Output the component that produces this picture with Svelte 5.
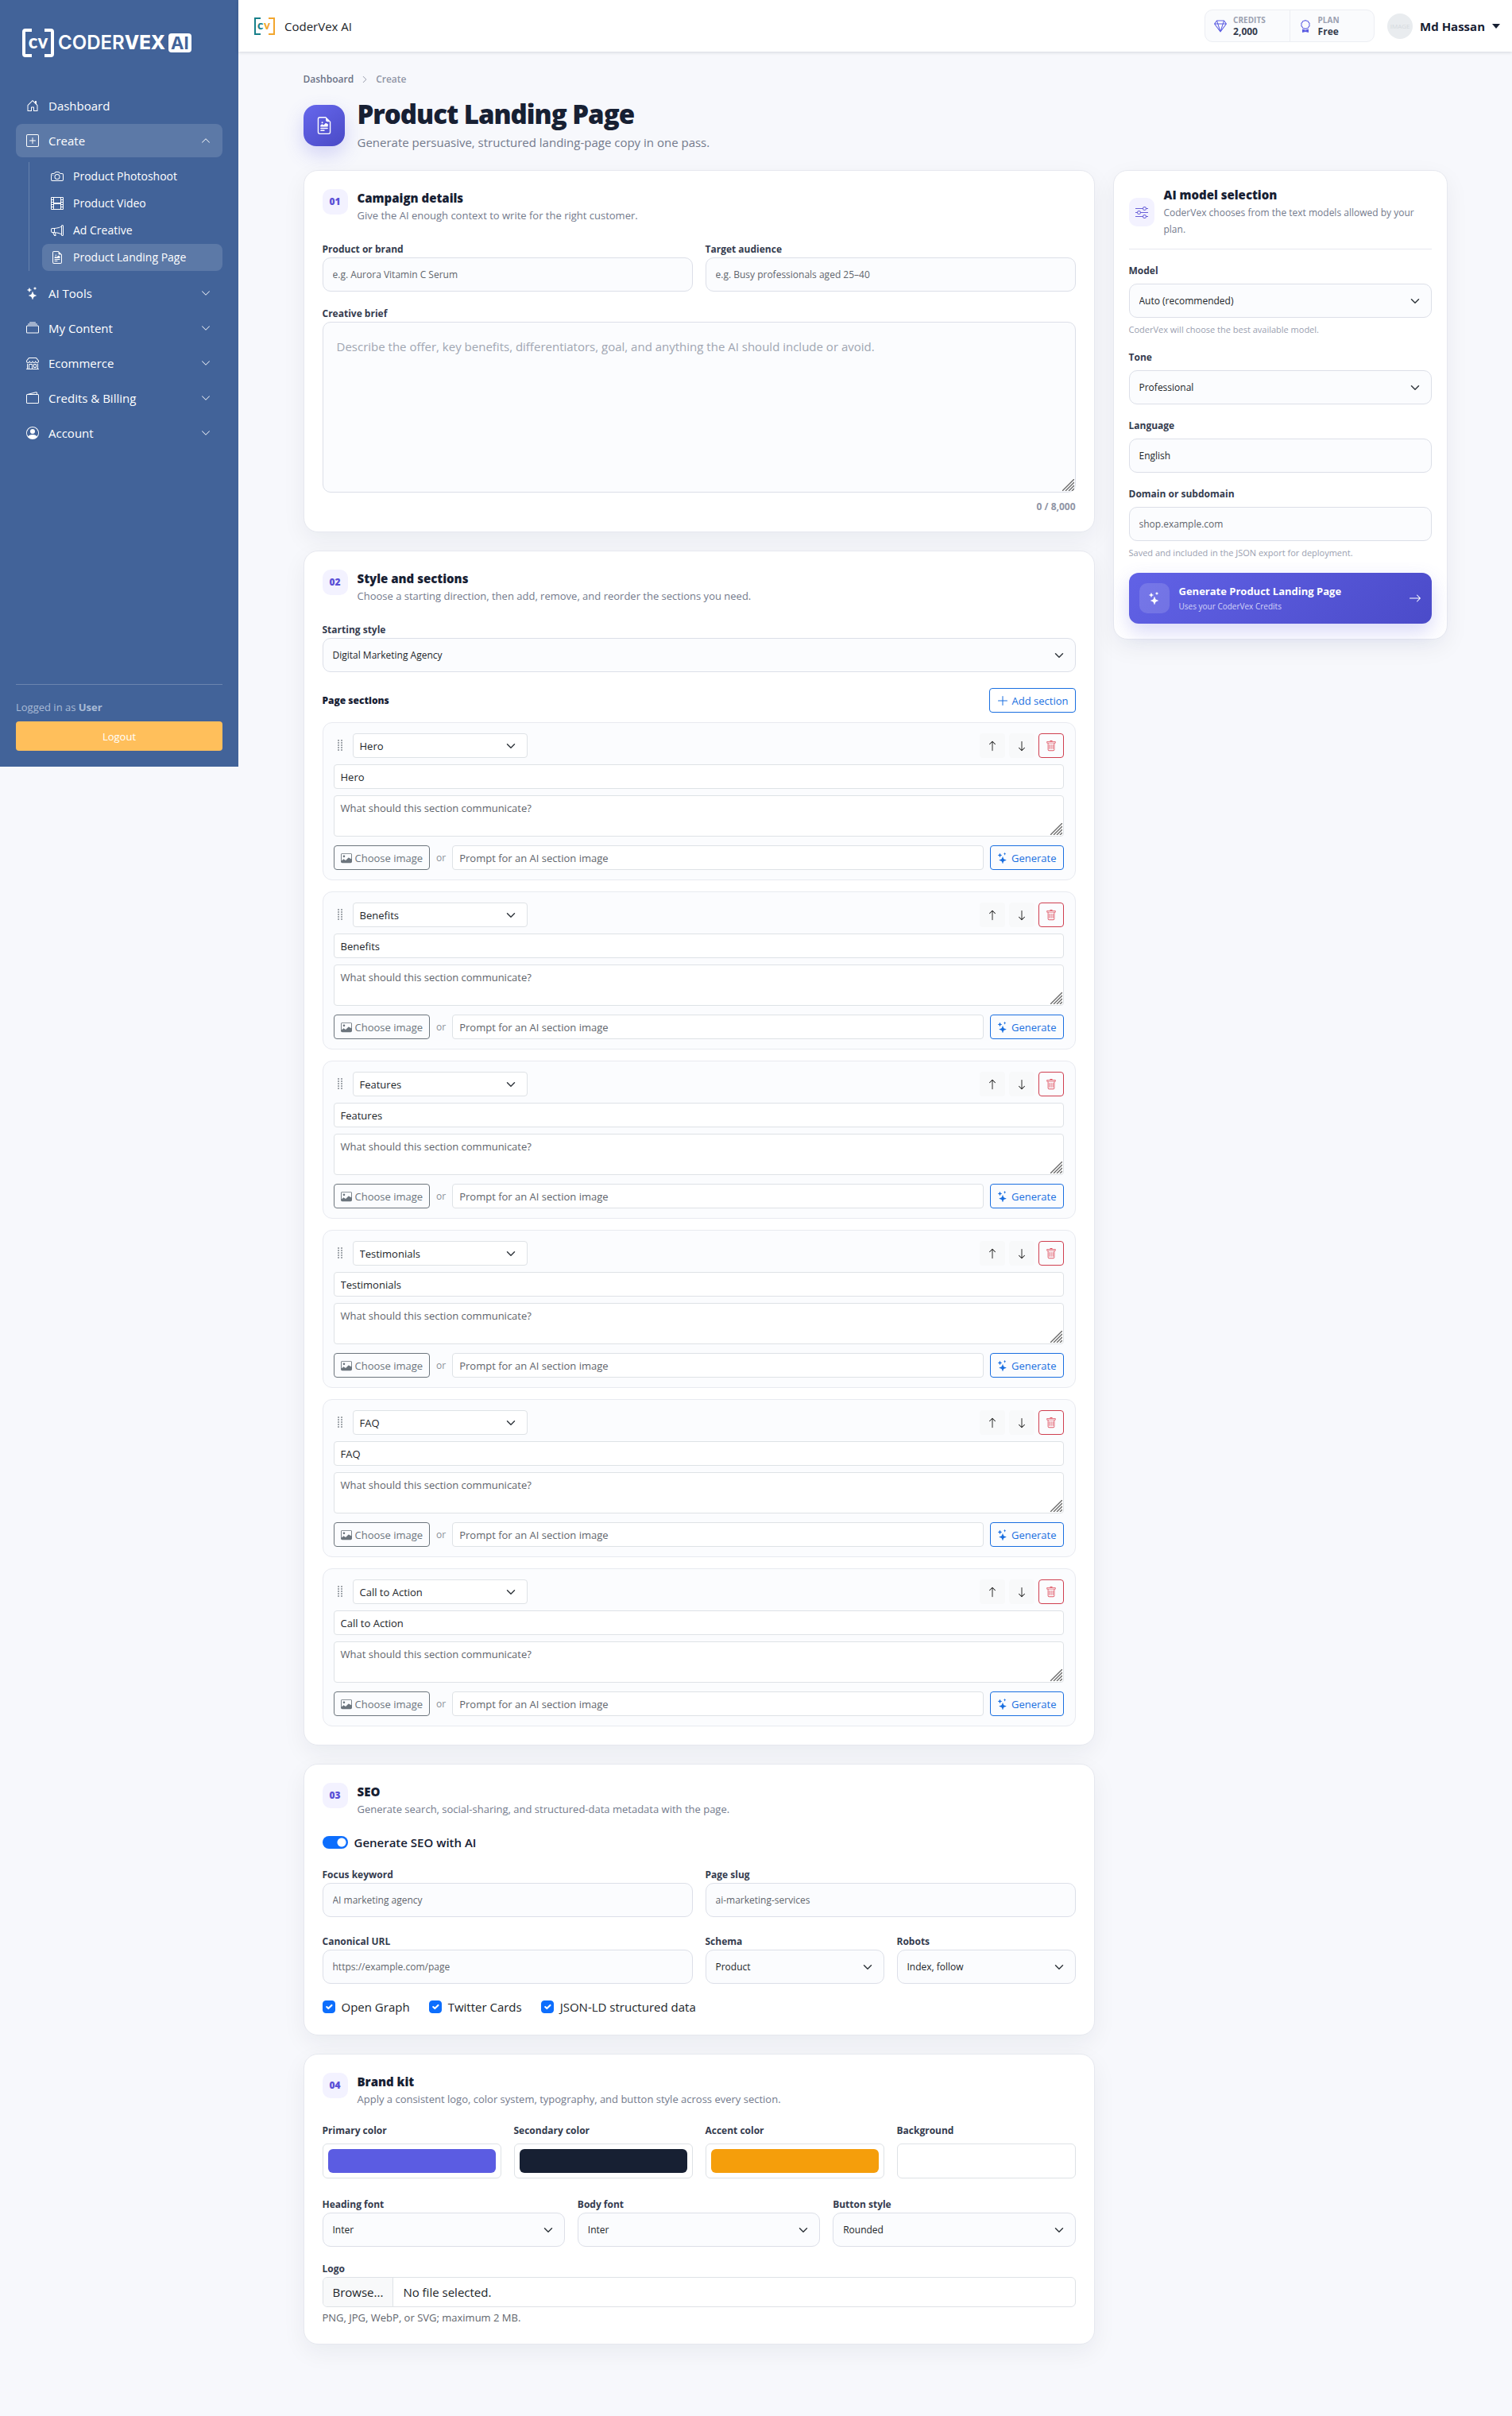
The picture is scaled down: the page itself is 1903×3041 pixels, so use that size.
<script lang="ts">
  type NavItem = { label: string; icon: string; children?: { label: string; icon: string; active?: boolean }[] };

  const nav: NavItem[] = [
    { label: "Dashboard", icon: "house" },
    {
      label: "Create",
      icon: "plusSquare",
      children: [
        { label: "Product Photoshoot", icon: "camera" },
        { label: "Product Video", icon: "film" },
        { label: "Ad Creative", icon: "megaphone" },
        { label: "Product Landing Page", icon: "richtext", active: true },
      ],
    },
    { label: "AI Tools", icon: "stars" },
    { label: "My Content", icon: "collection" },
    { label: "Ecommerce", icon: "shop" },
    { label: "Credits & Billing", icon: "wallet" },
    { label: "Account", icon: "person" },
  ];

  // 16x16 icon paths
  const icons: Record<string, string[]> = {
    house: ["M8.354 1.146a.5.5 0 0 0-.708 0l-6 6A.5.5 0 0 0 1.5 7.5v7a.5.5 0 0 0 .5.5h4.5a.5.5 0 0 0 .5-.5v-4h2v4a.5.5 0 0 0 .5.5H14a.5.5 0 0 0 .5-.5v-7a.5.5 0 0 0-.146-.354L13 5.793V2.5a.5.5 0 0 0-.5-.5h-1a.5.5 0 0 0-.5.5v1.293zM2.5 14V7.707l5.5-5.5 5.5 5.5V14H10v-4a.5.5 0 0 0-.5-.5h-3a.5.5 0 0 0-.5.5v4z"],
    plusSquare: [
      "M14 1a1 1 0 0 1 1 1v12a1 1 0 0 1-1 1H2a1 1 0 0 1-1-1V2a1 1 0 0 1 1-1zM2 0a2 2 0 0 0-2 2v12a2 2 0 0 0 2 2h12a2 2 0 0 0 2-2V2a2 2 0 0 0-2-2z",
      "M8 4a.5.5 0 0 1 .5.5v3h3a.5.5 0 0 1 0 1h-3v3a.5.5 0 0 1-1 0v-3h-3a.5.5 0 0 1 0-1h3v-3A.5.5 0 0 1 8 4",
    ],
    camera: [
      "M15 12a1 1 0 0 1-1 1H2a1 1 0 0 1-1-1V6a1 1 0 0 1 1-1h1.172a3 3 0 0 0 2.12-.879l.83-.828A1 1 0 0 1 6.827 3h2.344a1 1 0 0 1 .707.293l.828.828A3 3 0 0 0 12.828 5H14a1 1 0 0 1 1 1zM2 4a2 2 0 0 0-2 2v6a2 2 0 0 0 2 2h12a2 2 0 0 0 2-2V6a2 2 0 0 0-2-2h-1.172a2 2 0 0 1-1.414-.586l-.828-.828A2 2 0 0 0 9.172 2H6.828a2 2 0 0 0-1.414.586l-.828.828A2 2 0 0 1 3.172 4z",
      "M8 11a2.5 2.5 0 1 1 0-5 2.5 2.5 0 0 1 0 5m0 1a3.5 3.5 0 1 0 0-7 3.5 3.5 0 0 0 0 7M3 6.5a.5.5 0 1 1-1 0 .5.5 0 0 1 1 0",
    ],
    film: ["M0 1a1 1 0 0 1 1-1h14a1 1 0 0 1 1 1v14a1 1 0 0 1-1 1H1a1 1 0 0 1-1-1zm4 0v6h8V1zm8 8H4v6h8zM1 1v2h2V1zm2 3H1v2h2zM1 7v2h2V7zm2 3H1v2h2zm-2 3v2h2v-2zM15 1h-2v2h2zm-2 3v2h2V4zm2 3h-2v2h2zm-2 3v2h2v-2zm2 3h-2v2h2z"],
    megaphone: ["M13 2.5a1.5 1.5 0 0 1 3 0v11a1.5 1.5 0 0 1-3 0v-.214c-2.162-1.241-4.49-1.843-6.912-2.083l.405 2.712A1 1 0 0 1 5.51 15.1h-.548a1 1 0 0 1-.916-.599l-1.85-3.49-.202-.003A2.014 2.014 0 0 1 0 9V7a2.02 2.02 0 0 1 1.992-2.013 75 75 0 0 0 2.483-.075c3.043-.154 6.148-.849 8.525-2.199zm1 0v11a.5.5 0 0 0 1 0v-11a.5.5 0 0 0-1 0m-1 1.35c-2.344 1.205-5.209 1.842-8 2.033v4.233q.27.015.537.036c2.568.189 5.093.744 7.463 1.993zm-9 6.215v-4.13a95 95 0 0 1-1.992.052A1.02 1.02 0 0 0 1 7v2c0 .55.448 1.002 1.006 1.009A61 61 0 0 1 4 10.065m-.657.975 1.609 3.037.01.024h.548l-.002-.014-.443-2.966a68 68 0 0 0-1.722-.082z"],
    richtext: [
      "M14 4.5V14a2 2 0 0 1-2 2H4a2 2 0 0 1-2-2V2a2 2 0 0 1 2-2h5.5zm-3 0A1.5 1.5 0 0 1 9.5 3V1H4a1 1 0 0 0-1 1v12a1 1 0 0 0 1 1h8a1 1 0 0 0 1-1V4.5z",
      "M4.5 12.5A.5.5 0 0 1 5 12h3a.5.5 0 0 1 0 1H5a.5.5 0 0 1-.5-.5m0-2A.5.5 0 0 1 5 10h6a.5.5 0 0 1 0 1H5a.5.5 0 0 1-.5-.5m1.639-3.708 1.33.886 1.854-1.855a.25.25 0 0 1 .289-.047l1.888.974V8.5a.5.5 0 0 1-.5.5H5a.5.5 0 0 1-.5-.5V8s1.54-1.274 1.639-1.208M6.25 6a.75.75 0 1 0 0-1.5.75.75 0 0 0 0 1.5",
    ],
    stars: ["M7.657 6.247c.11-.33.576-.33.686 0l.645 1.937a2.89 2.89 0 0 0 1.829 1.828l1.936.645c.33.11.33.576 0 .686l-1.937.645a2.89 2.89 0 0 0-1.828 1.829l-.645 1.936a.361.361 0 0 1-.686 0l-.645-1.937a2.89 2.89 0 0 0-1.828-1.828l-1.937-.645a.361.361 0 0 1 0-.686l1.937-.645a2.89 2.89 0 0 0 1.828-1.828zM3.794 1.148a.217.217 0 0 1 .412 0l.387 1.162c.173.518.579.924 1.097 1.097l1.162.387a.217.217 0 0 1 0 .412l-1.162.387A1.73 1.73 0 0 0 4.593 5.69l-.387 1.162a.217.217 0 0 1-.412 0L3.407 5.69A1.73 1.73 0 0 0 2.31 4.593l-1.162-.387a.217.217 0 0 1 0-.412l1.162-.387A1.73 1.73 0 0 0 3.407 2.31zM10.863.099a.145.145 0 0 1 .274 0l.258.774c.115.346.386.617.732.732l.774.258a.145.145 0 0 1 0 .274l-.774.258a1.16 1.16 0 0 0-.732.732l-.258.774a.145.145 0 0 1-.274 0l-.258-.774a1.16 1.16 0 0 0-.732-.732L9.1 2.137a.145.145 0 0 1 0-.274l.774-.258c.346-.115.617-.386.732-.732z"],
    collection: ["M2.5 3.5a.5.5 0 0 1 0-1h11a.5.5 0 0 1 0 1zm2-2a.5.5 0 0 1 0-1h7a.5.5 0 0 1 0 1zM0 13a1.5 1.5 0 0 0 1.5 1.5h13A1.5 1.5 0 0 0 16 13V6a1.5 1.5 0 0 0-1.5-1.5h-13A1.5 1.5 0 0 0 0 6zm1.5.5A.5.5 0 0 1 1 13V6a.5.5 0 0 1 .5-.5h13a.5.5 0 0 1 .5.5v7a.5.5 0 0 1-.5.5z"],
    shop: ["M2.97 1.35A1 1 0 0 1 3.73 1h8.54a1 1 0 0 1 .76.35l2.609 3.044A1.5 1.5 0 0 1 16 5.37v.255a2.375 2.375 0 0 1-4.25 1.458A2.37 2.37 0 0 1 9.875 8 2.37 2.37 0 0 1 8 7.083 2.37 2.37 0 0 1 6.125 8a2.37 2.37 0 0 1-1.875-.917A2.375 2.375 0 0 1 0 5.625V5.37a1.5 1.5 0 0 1 .361-.976zm1.78 4.275a1.375 1.375 0 0 0 2.75 0 .5.5 0 0 1 1 0 1.375 1.375 0 0 0 2.75 0 .5.5 0 0 1 1 0 1.375 1.375 0 1 0 2.75 0V5.37a.5.5 0 0 0-.12-.325L12.27 2H3.73L1.12 5.045A.5.5 0 0 0 1 5.37v.255a1.375 1.375 0 0 0 2.75 0 .5.5 0 0 1 1 0M1.5 8.5A.5.5 0 0 1 2 9v6h1v-5a1 1 0 0 1 1-1h3a1 1 0 0 1 1 1v5h6V9a.5.5 0 0 1 1 0v6h.5a.5.5 0 0 1 0 1H.5a.5.5 0 0 1 0-1H1V9a.5.5 0 0 1 .5-.5M4 15h3v-5H4zm5-5a1 1 0 0 1 1-1h2a1 1 0 0 1 1 1v3a1 1 0 0 1-1 1h-2a1 1 0 0 1-1-1zm3 0h-2v3h2z"],
    wallet: ["M12.136.326A1.5 1.5 0 0 1 14 1.78V3h.5A1.5 1.5 0 0 1 16 4.5v9a1.5 1.5 0 0 1-1.5 1.5h-13A1.5 1.5 0 0 1 0 13.5v-9a1.5 1.5 0 0 1 1.432-1.499zM5.562 3H13V1.78a.5.5 0 0 0-.621-.484zM1.5 4a.5.5 0 0 0-.5.5v9a.5.5 0 0 0 .5.5h13a.5.5 0 0 0 .5-.5v-9a.5.5 0 0 0-.5-.5z"],
    person: [
      "M11 6a3 3 0 1 1-6 0 3 3 0 0 1 6 0",
      "M0 8a8 8 0 1 1 16 0A8 8 0 0 1 0 8m8-7a7 7 0 0 0-5.468 11.37C3.242 11.226 4.805 10 8 10s4.757 1.225 5.468 2.37A7 7 0 0 0 8 1",
    ],
    chevron: ["M1.646 4.646a.5.5 0 0 1 .708 0L8 10.293l5.646-5.647a.5.5 0 0 1 .708.708l-6 6a.5.5 0 0 1-.708 0l-6-6a.5.5 0 0 1 0-.708"],
    gem: ["M3.1.7a.5.5 0 0 1 .4-.2h9a.5.5 0 0 1 .4.2l2.976 3.974c.149.185.156.45.01.644L8.4 15.3a.5.5 0 0 1-.8 0L.1 5.3a.5.5 0 0 1 0-.6zm11.386 3.785-1.806-2.41-.776 2.413zm-3.633.004.961-2.989H4.186l.963 2.995zM5.47 5.495 8 13.366l2.532-7.876zm-1.371-.999-.78-2.422-1.818 2.425zM1.499 5.5l5.113 6.817-2.192-6.82zm7.889 6.817 5.123-6.83-2.928.002z"],
    award: [
      "M9.669.864 8 0 6.331.864l-1.858.282-.842 1.68-1.337 1.32L2.6 6l-.306 1.854 1.337 1.32.842 1.68 1.858.282L8 12l1.669-.864 1.858-.282.842-1.68 1.337-1.32L13.4 6l.306-1.854-1.337-1.32-.842-1.68zm1.196 1.193.684 1.365 1.086 1.072L12.387 6l.248 1.506-1.086 1.072-.684 1.365-1.51.229L8 10.874l-1.355-.702-1.51-.229-.684-1.365-1.086-1.072L3.614 6l-.25-1.506 1.087-1.072.684-1.365 1.51-.229L8 1.126l1.356.702z",
      "M4 11.794V16l4-1 4 1v-4.206l-2.018.306L8 13.126 6.018 12.1z",
    ],
    sliders: ["M11.5 2a1.5 1.5 0 1 0 0 3 1.5 1.5 0 0 0 0-3M9.05 3a2.5 2.5 0 0 1 4.9 0H16v1h-2.05a2.5 2.5 0 0 1-4.9 0H0V3zM4.5 7a1.5 1.5 0 1 0 0 3 1.5 1.5 0 0 0 0-3M2.05 8a2.5 2.5 0 0 1 4.9 0H16v1H6.95a2.5 2.5 0 0 1-4.9 0H0V8zm9.45 4a1.5 1.5 0 1 0 0 3 1.5 1.5 0 0 0 0-3m-2.45 1a2.5 2.5 0 0 1 4.9 0H16v1h-2.05a2.5 2.5 0 0 1-4.9 0H0v-1z"],
    arrow: ["M8 15a.5.5 0 0 0 .5-.5V2.707l3.146 3.147a.5.5 0 0 0 .708-.708l-4-4a.5.5 0 0 0-.708 0l-4 4a.5.5 0 1 0 .708.708L7.5 2.707V14.5a.5.5 0 0 0 .5.5"],
    plus: ["M8 2a.5.5 0 0 1 .5.5v5h5a.5.5 0 0 1 0 1h-5v5a.5.5 0 0 1-1 0v-5h-5a.5.5 0 0 1 0-1h5v-5A.5.5 0 0 1 8 2"],
    trash: [
      "M5.5 5.5A.5.5 0 0 1 6 6v6a.5.5 0 0 1-1 0V6a.5.5 0 0 1 .5-.5m2.5 0a.5.5 0 0 1 .5.5v6a.5.5 0 0 1-1 0V6a.5.5 0 0 1 .5-.5m3 .5a.5.5 0 0 0-1 0v6a.5.5 0 0 0 1 0z",
      "M14.5 3a1 1 0 0 1-1 1H13v9a2 2 0 0 1-2 2H5a2 2 0 0 1-2-2V4h-.5a1 1 0 0 1-1-1V2a1 1 0 0 1 1-1H6a1 1 0 0 1 1-1h2a1 1 0 0 1 1 1h3.5a1 1 0 0 1 1 1zM4.118 4 4 4.059V13a1 1 0 0 0 1 1h6a1 1 0 0 0 1-1V4.059L11.882 4zM2.5 3h11V2h-11z",
    ],
    image: [
      "M6.002 5.5a1.5 1.5 0 1 1-3 0 1.5 1.5 0 0 1 3 0",
      "M2.002 1a2 2 0 0 0-2 2v10a2 2 0 0 0 2 2h12a2 2 0 0 0 2-2V3a2 2 0 0 0-2-2zm12 1a1 1 0 0 1 1 1v6.5l-3.777-1.947a.5.5 0 0 0-.577.093l-3.71 3.71-2.66-1.772a.5.5 0 0 0-.63.062L1.002 12V3a1 1 0 0 1 1-1z",
    ],
  };

  const sectionTypes = ["Hero", "Benefits", "Features", "Testimonials", "FAQ", "Call to Action"];
  let nextId = sectionTypes.length;
  let sections = $state(sectionTypes.map((type, id) => ({ id, type, title: type, notes: "", prompt: "" })));

  let brief = $state("");
  let useSeo = $state(true);
  let createOpen = $state(true);
  let fileName = $state("");

  let colors = $state([
    { label: "Primary color", value: "#5b5ce2" },
    { label: "Secondary color", value: "#172033" },
    { label: "Accent color", value: "#f59e0b" },
    { label: "Background", value: "#ffffff" },
  ]);

  const fontFields = [
    { id: "heading-font", label: "Heading font", options: ["Inter", "Roboto", "Lato"] },
    { id: "body-font", label: "Body font", options: ["Inter", "Roboto", "Lato"] },
    { id: "button-style", label: "Button style", options: ["Rounded", "Pill", "Square"] },
  ];

  function addSection() {
    sections.push({ id: nextId++, type: "Features", title: "Features", notes: "", prompt: "" });
  }

  function removeSection(i: number) {
    sections.splice(i, 1);
  }

  function moveSection(i: number, step: number) {
    const j = i + step;
    if (j < 0 || j >= sections.length) return;
    const [item] = sections.splice(i, 1);
    sections.splice(j, 0, item);
  }

  function pickLogo(e: Event) {
    const input = e.currentTarget as HTMLInputElement;
    fileName = input.files?.[0]?.name ?? "";
  }
</script>

{#snippet icon(name: string, cls = "")}
  <svg class="icon {cls}" viewBox="0 0 16 16" fill="currentColor" aria-hidden="true">
    {#each icons[name] as d}
      <path {d} />
    {/each}
  </svg>
{/snippet}

{#snippet grip()}
  <svg class="resize-grip" viewBox="0 0 15 15" aria-hidden="true">
    <path d="M0 15L15 0M4 15L15 4M8 15L15 8M12 15L15 12" stroke="#666" stroke-width="1.3" fill="none" />
  </svg>
{/snippet}

{#snippet cardHead(num: string, title: string, text: string)}
  <header class="card-head">
    <span class="num">{num}</span>
    <div>
      <h2>{title}</h2>
      <p>{text}</p>
    </div>
  </header>
{/snippet}

<div class="layout">
  <aside class="sidebar">
    <a class="brand" href="#home" aria-label="CoderVex AI">
      <svg class="brand-mark" viewBox="0 0 42 38" aria-hidden="true">
        <path d="M13 3H5Q3 3 3 5V33Q3 35 5 35H13M29 3H37Q39 3 39 5V33Q39 35 37 35H29" fill="none" stroke="#fff" stroke-width="4" />
        <text x="21" y="26" text-anchor="middle" fill="#fff">cv</text>
      </svg>
      <span class="brand-name">CODER<b>VEX</b></span>
      <span class="brand-ai">AI</span>
    </a>

    <nav class="nav">
      {#each nav as item}
        {#if item.children}
          <button class="nav-item" class:active={createOpen} onclick={() => (createOpen = !createOpen)}>
            {@render icon(item.icon)}
            <span>{item.label}</span>
            {@render icon("chevron", createOpen ? "caret flip" : "caret")}
          </button>
          {#if createOpen}
            <div class="subnav">
              {#each item.children as child}
                <a class="sub-item" class:active={child.active} href="#create">
                  {@render icon(child.icon)}
                  <span>{child.label}</span>
                </a>
              {/each}
            </div>
          {/if}
        {:else if item.label === "Dashboard"}
          <a class="nav-item" href="#dashboard">
            {@render icon(item.icon)}
            <span>{item.label}</span>
          </a>
        {:else}
          <button class="nav-item">
            {@render icon(item.icon)}
            <span>{item.label}</span>
            {@render icon("chevron", "caret")}
          </button>
        {/if}
      {/each}
    </nav>

    <div class="sidebar-foot">
      <p>Logged in as <b>User</b></p>
      <button class="logout">Logout</button>
    </div>
  </aside>

  <div class="page">
    <header class="topbar">
      <a class="top-brand" href="#home">
        <svg viewBox="0 0 26 22" aria-hidden="true">
          <path d="M8 1H1V21H8" fill="none" stroke="#18808a" stroke-width="2" />
          <path d="M18 1H25V21H18" fill="none" stroke="#f2a62e" stroke-width="2" />
          <text x="4" y="15" fill="#18808a">c</text>
          <text x="12" y="15" fill="#f2a62e">v</text>
        </svg>
        <span>CoderVex AI</span>
      </a>
      <div class="stats">
        <div class="stat">
          {@render icon("gem")}
          <span><small>CREDITS</small><b>2,000</b></span>
        </div>
        <div class="stat">
          {@render icon("award")}
          <span><small>PLAN</small><b>Free</b></span>
        </div>
      </div>
      <button class="user">
        <span class="avatar">IMAGE</span>
        <b>Md Hassan</b>
        <svg class="user-caret" viewBox="0 0 10 6" aria-hidden="true"><path d="M0 0H10L5 6Z" fill="#172033" /></svg>
      </button>
    </header>

    <main class="content">
      <nav class="crumbs" aria-label="Breadcrumb">
        <a href="#dashboard">Dashboard</a>
        {@render icon("chevron", "crumb-sep")}
        <span>Create</span>
      </nav>

      <div class="hero">
        <span class="hero-icon">{@render icon("richtext")}</span>
        <div>
          <h1>Product Landing Page</h1>
          <p>Generate persuasive, structured landing-page copy in one pass.</p>
        </div>
      </div>

      <div class="columns">
        <div class="stack">
          <section class="card">
            {@render cardHead("01", "Campaign details", "Give the AI enough context to write for the right customer.")}
            <div class="grid two">
              <div class="field">
                <label for="product">Product or brand</label>
                <input id="product" class="control" placeholder="e.g. Aurora Vitamin C Serum" />
              </div>
              <div class="field">
                <label for="audience">Target audience</label>
                <input id="audience" class="control" placeholder="e.g. Busy professionals aged 25–40" />
              </div>
            </div>
            <div class="field brief">
              <label for="brief">Creative brief</label>
              <div class="area">
                <textarea
                  id="brief"
                  class="control"
                  maxlength="8000"
                  placeholder="Describe the offer, key benefits, differentiators, goal, and anything the AI should include or avoid."
                  bind:value={brief}></textarea>
                {@render grip()}
              </div>
              <div class="counter">{brief.length} / 8,000</div>
            </div>
          </section>

          <section class="card">
            {@render cardHead("02", "Style and sections", "Choose a starting direction, then add, remove, and reorder the sections you need.")}
            <div class="field">
              <label for="style">Starting style</label>
              <select id="style" class="control">
                <option>Digital Marketing Agency</option>
                <option>SaaS Product</option>
                <option>Online Store</option>
              </select>
            </div>
            <div class="sections-head">
              <h3>Page sections</h3>
              <button class="btn blue" onclick={addSection}>{@render icon("plus", "lg")}Add section</button>
            </div>
            <div class="sections">
              {#each sections as section, i (section.id)}
                <div class="section">
                  <div class="section-top">
                    <svg class="drag" viewBox="0 0 6 15" fill="#a3a8ae" aria-hidden="true">
                      {#each [0, 3, 6, 9, 12] as y}
                        <rect x="0" {y} width="2" height="2" />
                        <rect x="4" {y} width="2" height="2" />
                      {/each}
                    </svg>
                    <select class="small type" aria-label="Section type" bind:value={section.type}>
                      {#each sectionTypes as type}
                        <option>{type}</option>
                      {/each}
                    </select>
                    <div class="tools">
                      <button class="btn light" aria-label="Move up" onclick={() => moveSection(i, -1)}>{@render icon("arrow")}</button>
                      <button class="btn light" aria-label="Move down" onclick={() => moveSection(i, 1)}>{@render icon("arrow", "flip")}</button>
                      <button class="btn red" aria-label="Remove" onclick={() => removeSection(i)}>{@render icon("trash")}</button>
                    </div>
                  </div>
                  <input class="small" aria-label="Section title" bind:value={section.title} />
                  <div class="area">
                    <textarea class="small" aria-label="Section notes" placeholder="What should this section communicate?" bind:value={section.notes}></textarea>
                    {@render grip()}
                  </div>
                  <div class="section-media">
                    <button class="btn gray">{@render icon("image")}Choose image</button>
                    <span class="or">or</span>
                    <input class="small" aria-label="Image prompt" placeholder="Prompt for an AI section image" bind:value={section.prompt} />
                    <button class="btn blue">{@render icon("stars")}Generate</button>
                  </div>
                </div>
              {/each}
            </div>
          </section>

          <section class="card tight">
            {@render cardHead("03", "SEO", "Generate search, social-sharing, and structured-data metadata with the page.")}
            <label class="check strong">
              <input type="checkbox" class="switch" role="switch" bind:checked={useSeo} />
              Generate SEO with AI
            </label>
            <div class="grid seo">
              <div class="field wide">
                <label for="keyword">Focus keyword</label>
                <input id="keyword" class="control" placeholder="AI marketing agency" />
              </div>
              <div class="field wide">
                <label for="slug">Page slug</label>
                <input id="slug" class="control" placeholder="ai-marketing-services" />
              </div>
              <div class="field wide">
                <label for="canonical">Canonical URL</label>
                <input id="canonical" class="control" placeholder="https://example.com/page" />
              </div>
              <div class="field">
                <label for="schema">Schema</label>
                <select id="schema" class="control">
                  <option>Product</option>
                  <option>Service</option>
                </select>
              </div>
              <div class="field">
                <label for="robots">Robots</label>
                <select id="robots" class="control">
                  <option>Index, follow</option>
                  <option>Noindex, nofollow</option>
                </select>
              </div>
            </div>
            <div class="checks">
              {#each ["Open Graph", "Twitter Cards", "JSON-LD structured data"] as option}
                <label class="check">
                  <input type="checkbox" class="box" checked />
                  {option}
                </label>
              {/each}
            </div>
          </section>

          <section class="card tight">
            {@render cardHead("04", "Brand kit", "Apply a consistent logo, color system, typography, and button style across every section.")}
            <div class="grid four">
              {#each colors as color, i}
                <div class="field spaced">
                  <label for="color-{i}">{color.label}</label>
                  <input id="color-{i}" class="swatch" type="color" bind:value={color.value} />
                </div>
              {/each}
            </div>
            <div class="grid three">
              {#each fontFields as f}
                <div class="field">
                  <label for={f.id}>{f.label}</label>
                  <select id={f.id} class="control">
                    {#each f.options as option}
                      <option>{option}</option>
                    {/each}
                  </select>
                </div>
              {/each}
            </div>
            <div class="field">
              <label for="logo">Logo</label>
              <div class="file">
                <input id="logo" type="file" accept=".png,.jpg,.webp,.svg" onchange={pickLogo} />
                <span class="file-btn">Browse...</span>
                <span class="file-name">{fileName || "No file selected."}</span>
              </div>
              <p class="file-hint">PNG, JPG, WebP, or SVG; maximum 2 MB.</p>
            </div>
          </section>
        </div>

        <aside class="card panel">
          <header class="panel-head">
            <span class="panel-icon">{@render icon("sliders")}</span>
            <div>
              <h2>AI model selection</h2>
              <p>CoderVex chooses from the text models allowed by your plan.</p>
            </div>
          </header>
          <div class="field spaced">
            <label for="model">Model</label>
            <select id="model" class="control">
              <option>Auto (recommended)</option>
            </select>
            <p class="hint">CoderVex will choose the best available model.</p>
          </div>
          <div class="field spaced">
            <label for="tone">Tone</label>
            <select id="tone" class="control">
              <option>Professional</option>
              <option>Friendly</option>
              <option>Playful</option>
            </select>
          </div>
          <div class="field spaced">
            <label for="language">Language</label>
            <input id="language" class="control" value="English" />
          </div>
          <div class="field spaced">
            <label for="domain">Domain or subdomain</label>
            <input id="domain" class="control" placeholder="shop.example.com" />
            <p class="hint">Saved and included in the JSON export for deployment.</p>
          </div>
          <button class="generate">
            <span class="generate-icon">{@render icon("stars")}</span>
            <span class="generate-text">
              <b>Generate Product Landing Page</b>
              <small>Uses your CoderVex Credits</small>
            </span>
            {@render icon("arrow", "right")}
          </button>
        </aside>
      </div>
    </main>
  </div>
</div>

<style>
  :global(body) {
    background: #f7f8fc;
    color: #212529;
    font-family: "Open Sans", "Noto Sans", sans-serif;
    font-size: 15px;
    line-height: 24px;
  }

  * {
    box-sizing: border-box;
  }

  h1, h2, h3, p {
    margin: 0;
  }

  a {
    color: inherit;
    text-decoration: none;
  }

  button, input, select, textarea {
    font: inherit;
    color: inherit;
    margin: 0;
  }

  button {
    cursor: pointer;
  }

  .icon {
    width: 16px;
    height: 16px;
    flex: none;
  }

  .flip {
    transform: rotate(180deg);
  }

  .right {
    transform: rotate(90deg);
  }

  .layout {
    display: flex;
    align-items: flex-start;
  }

  /* sidebar */
  .sidebar {
    flex: 0 0 300px;
    padding: 35px 20px 20px;
    background: #426399;
    color: #fff;
  }

  .brand {
    display: flex;
    align-items: center;
    gap: 4px;
    height: 38px;
    margin: 0 0 39px 7px;
    font-family: Inter, sans-serif;
  }

  .brand-mark {
    width: 42px;
    height: 38px;
  }

  .brand-mark text {
    font: 900 24px Lato, sans-serif;
  }

  .brand-name {
    font-size: 24px;
    font-weight: 600;
  }

  .brand-name b {
    font-weight: 800;
  }

  .brand-ai {
    padding: 0 3px;
    border-radius: 4px;
    background: #fff;
    color: #426399;
    font-size: 22px;
    font-weight: 700;
    line-height: 24px;
  }

  .nav {
    display: flex;
    flex-direction: column;
    gap: 2px;
    padding-bottom: 295px;
  }

  .nav-item {
    display: flex;
    align-items: center;
    gap: 12px;
    height: 42px;
    padding: 0 15px 0 13px;
    border: 0;
    border-radius: 8px;
    background: none;
    text-align: left;
  }

  .nav-item span {
    flex: 1;
  }

  .caret {
    width: 12px;
    height: 12px;
  }

  .active {
    background: rgba(255, 255, 255, 0.14);
  }

  .subnav {
    display: flex;
    flex-direction: column;
    margin: 4px 0 5px 16px;
    padding: 1px 0 0 16px;
    border-left: 1px solid rgba(255, 255, 255, 0.2);
  }

  .sub-item {
    display: flex;
    align-items: center;
    gap: 12px;
    height: 34px;
    padding: 0 11px;
    border-radius: 8px;
    font-size: 14px;
  }

  .sidebar-foot {
    padding-top: 16px;
    border-top: 1px solid rgba(255, 255, 255, 0.22);
    color: #a9bbd6;
    font-size: 13px;
  }

  .logout {
    width: 100%;
    height: 37px;
    margin-top: 6px;
    border: 0;
    border-radius: 4px;
    background: #ffbf5b;
    color: #fff;
  }

  /* top bar */
  .page {
    flex: 1;
    min-width: 0;
  }

  .topbar {
    display: flex;
    align-items: center;
    height: 65px;
    padding: 0 15px 0 20px;
    background: #fff;
    box-shadow: 0 1px 4px rgba(23, 32, 51, 0.16);
  }

  .top-brand {
    display: flex;
    align-items: center;
    gap: 12px;
    margin-right: auto;
  }

  .top-brand svg {
    width: 26px;
    height: 22px;
  }

  .top-brand text {
    font: 900 15px Lato, sans-serif;
  }

  .stats {
    display: flex;
    width: 214px;
    margin-right: 16px;
    border: 1px solid #eceef3;
    border-radius: 10px;
    background: #fafbfd;
  }

  .stat {
    display: flex;
    flex: 1;
    align-items: center;
    gap: 8px;
    height: 39px;
    padding-left: 11px;
    color: #5b5ce2;
  }

  .stat + .stat {
    border-left: 1px solid #eceef3;
  }

  .stat span {
    display: flex;
    flex-direction: column;
  }

  .stat small {
    color: #9aa0b0;
    font-size: 10px;
    font-weight: 700;
    line-height: 13px;
  }

  .stat b {
    color: #343b4e;
    font-size: 12px;
    line-height: 15px;
  }

  .user {
    display: flex;
    align-items: center;
    gap: 9px;
    padding: 0;
    border: 0;
    background: none;
    color: #172033;
  }

  .avatar {
    width: 32px;
    height: 32px;
    border-radius: 50%;
    background: #e9ecef;
    color: #d5d9de;
    font-size: 8px;
    line-height: 32px;
  }

  .user-caret {
    width: 10px;
    height: 6px;
  }

  /* page heading */
  .content {
    max-width: 1440px;
    margin: 0 auto;
    padding: 25px 0 89px;
  }

  .crumbs {
    display: flex;
    align-items: center;
    gap: 9px;
    margin-bottom: 14px;
    color: #9095a5;
    font-size: 12px;
    font-weight: 600;
    line-height: 20px;
  }

  .crumbs a {
    color: #6c7286;
  }

  .crumb-sep {
    width: 10px;
    height: 10px;
    transform: rotate(-90deg);
  }

  .hero {
    display: flex;
    align-items: center;
    gap: 16px;
    margin-bottom: 23px;
  }

  .hero-icon {
    display: grid;
    place-items: center;
    width: 52px;
    height: 52px;
    border-radius: 16px;
    background: linear-gradient(145deg, #6667ec, #4a4ac6);
    box-shadow: 0 10px 24px rgba(91, 92, 226, 0.24);
    color: #fff;
  }

  .hero-icon .icon {
    width: 22px;
    height: 22px;
  }

  h1 {
    color: #172033;
    font-size: 33px;
    font-weight: 800;
    letter-spacing: -1px;
    line-height: 40px;
  }

  .hero p {
    margin-top: 3px;
    color: #737a8c;
  }

  /* cards */
  .columns {
    display: grid;
    grid-template-columns: minmax(0, 1fr) 421px;
    align-items: start;
    gap: 23px;
  }

  .stack {
    display: flex;
    flex-direction: column;
    gap: 23px;
  }

  .card {
    padding: 23px;
    border: 1px solid #e6e8ef;
    border-radius: 18px;
    background: #fff;
    box-shadow: 0 10px 30px rgba(23, 32, 51, 0.06);
  }

  .card-head {
    display: flex;
    align-items: flex-start;
    gap: 12px;
    margin-bottom: 23px;
  }

  .tight .card-head {
    margin-bottom: 20px;
  }

  .num {
    width: 32px;
    border-radius: 10px;
    background: #f3f2ff;
    color: #5b50d6;
    font-size: 12px;
    font-weight: 800;
    line-height: 32px;
    text-align: center;
  }

  h2 {
    color: #172033;
    font-size: 15px;
    font-weight: 800;
    line-height: 22px;
  }

  .card-head p {
    margin-top: 1px;
    color: #737a8c;
    font-size: 13px;
    line-height: 20px;
  }

  .grid {
    display: grid;
    gap: 18px 16px;
  }

  .two {
    grid-template-columns: repeat(2, 1fr);
  }

  .three {
    grid-template-columns: repeat(3, 1fr);
    margin: 23px 0 18px;
  }

  .four {
    grid-template-columns: repeat(4, 1fr);
  }

  .seo {
    grid-template-columns: repeat(4, 1fr);
    row-gap: 21px;
    margin-top: 19px;
  }

  .wide {
    grid-column: span 2;
  }

  .field {
    display: flex;
    flex-direction: column;
  }

  .field label {
    color: #343b4e;
    font-size: 12px;
    font-weight: 700;
    line-height: 20px;
  }

  .spaced label {
    margin-bottom: 6px;
  }

  .control {
    width: 100%;
    height: 43px;
    padding: 0 12px;
    border: 1px solid #dcdfe8;
    border-radius: 10px;
    background-color: #fbfcfe;
    font-size: 12px;
  }

  .control::placeholder, .small::placeholder {
    color: #5f656c;
    opacity: 1;
  }

  select {
    appearance: none;
    background-image: url("data:image/svg+xml,%3Csvg xmlns='http://www.w3.org/2000/svg' viewBox='0 0 16 16'%3E%3Cpath fill='none' stroke='%23343a40' stroke-linecap='round' stroke-linejoin='round' stroke-width='2' d='m2 5 6 6 6-6'/%3E%3C/svg%3E");
    background-position: right 14px center;
    background-repeat: no-repeat;
    background-size: 12px 12px;
  }

  .area {
    position: relative;
    display: flex;
  }

  .area textarea {
    resize: none;
  }

  .resize-grip {
    position: absolute;
    right: 2px;
    bottom: 2px;
    width: 15px;
    height: 15px;
    pointer-events: none;
  }

  .brief {
    margin-top: 18px;
  }

  .brief textarea {
    height: 215px;
    padding: 18px 17px;
    font-size: 15px;
    line-height: 24px;
  }

  .brief textarea::placeholder {
    color: #a0a6b2;
  }

  .counter {
    margin-top: 9px;
    color: #9095a5;
    font-size: 12px;
    font-weight: 700;
    line-height: 17px;
    text-align: right;
  }

  /* page sections */
  .sections-head {
    display: flex;
    align-items: center;
    justify-content: space-between;
    margin: 20px 0 12px;
  }

  h3 {
    color: #172033;
    font-size: 12px;
    font-weight: 800;
  }

  .btn {
    display: inline-flex;
    align-items: center;
    justify-content: center;
    gap: 4px;
    height: 31px;
    padding: 0 8px;
    border: 1px solid;
    border-radius: 4px;
    background: none;
    font-size: 13px;
    white-space: nowrap;
  }

  .btn .icon {
    width: 14px;
    height: 14px;
  }

  .btn .lg {
    width: 16px;
    height: 16px;
  }

  .blue {
    color: #1a6fe0;
  }

  .gray {
    color: #6c757d;
  }

  .red {
    width: 32px;
    border-color: #cf3f50;
    color: #e05766;
  }

  .light {
    width: 32px;
    border-color: #f8f9fa;
    background: #f8f9fa;
    color: #111;
  }

  .sections {
    display: flex;
    flex-direction: column;
    gap: 14px;
  }

  .section {
    display: flex;
    flex-direction: column;
    gap: 8px;
    padding: 13px 14px 12px 13px;
    border: 1px solid #e8eaf0;
    border-radius: 12px;
    background: #fbfcfe;
  }

  .section-top {
    display: flex;
    align-items: center;
    gap: 13px;
    padding-left: 5px;
  }

  .drag {
    width: 6px;
    height: 15px;
  }

  .tools {
    display: flex;
    gap: 5px;
    margin-left: auto;
  }

  .small {
    width: 100%;
    height: 31px;
    padding: 0 8px;
    border: 1px solid #dee2e6;
    border-radius: 4px;
    background-color: #fff;
    font-size: 13px;
  }

  .type {
    width: 220px;
  }

  .section textarea {
    height: 52px;
    padding: 4px 8px;
    line-height: 22px;
  }

  .section-media {
    display: flex;
    align-items: center;
    gap: 8px;
    margin-top: 3px;
  }

  .section-media .small {
    flex: 1;
    min-width: 0;
  }

  .or {
    color: #8b9199;
    font-size: 12px;
  }

  /* toggles */
  .check {
    display: flex;
    align-items: center;
    gap: 8px;
  }

  .strong {
    color: #172033;
    font-weight: 600;
  }

  .checks {
    display: flex;
    gap: 24px;
    margin-top: 17px;
  }

  .switch {
    appearance: none;
    width: 32px;
    height: 16px;
    border-radius: 8px;
    background: #adb5bd radial-gradient(circle at 8px 8px, #fff 5px, transparent 6px);
  }

  .switch:checked {
    background: #0d6efd radial-gradient(circle at 24px 8px, #fff 5px, transparent 6px);
  }

  .box {
    appearance: none;
    width: 16px;
    height: 16px;
    border: 1px solid #ced4da;
    border-radius: 4px;
  }

  .box:checked {
    border-color: #0d6efd;
    background: #0d6efd url("data:image/svg+xml,%3Csvg xmlns='http://www.w3.org/2000/svg' viewBox='0 0 20 20'%3E%3Cpath fill='none' stroke='%23fff' stroke-linecap='round' stroke-linejoin='round' stroke-width='3' d='m6 10 3 3 6-6'/%3E%3C/svg%3E");
  }

  /* brand kit */
  .swatch {
    appearance: none;
    width: 100%;
    height: 44px;
    padding: 6px;
    border: 1px solid #dee2e6;
    border-radius: 6px;
    background: #fff;
  }

  .swatch::-webkit-color-swatch-wrapper {
    padding: 0;
  }

  .swatch::-webkit-color-swatch {
    border: 0;
    border-radius: 6px;
  }

  .file {
    position: relative;
    display: flex;
    height: 38px;
    overflow: hidden;
    border: 1px solid #dee2e6;
    border-radius: 6px;
    line-height: 36px;
  }

  .file input {
    position: absolute;
    inset: 0;
    width: 100%;
    opacity: 0;
  }

  .file-btn {
    padding: 0 12px;
    border-right: 1px solid #dee2e6;
    background: #f8f9fa;
  }

  .file-name {
    padding: 0 12px;
  }

  .file-hint {
    margin-top: 3px;
    color: #5f656c;
    font-size: 13px;
    line-height: 20px;
  }

  /* model panel */
  .panel {
    display: flex;
    flex-direction: column;
    gap: 17px;
    padding: 19px;
  }

  .panel-head {
    display: flex;
    align-items: center;
    gap: 12px;
    padding-bottom: 14px;
    border-bottom: 1px solid #e6e8ef;
  }

  .panel-head p {
    margin-top: 1px;
    color: #737a8c;
    font-size: 12px;
    line-height: 21px;
  }

  .panel-icon {
    display: grid;
    flex: none;
    place-items: center;
    width: 32px;
    height: 36px;
    border-radius: 10px;
    background: #f3f2ff;
    color: #6a61d8;
  }

  .hint {
    margin-top: 6px;
    color: #9aa0b0;
    font-size: 11px;
    line-height: 17px;
  }

  .generate {
    display: flex;
    align-items: center;
    gap: 12px;
    height: 64px;
    padding: 0 13px;
    border: 0;
    border-radius: 12px;
    background: linear-gradient(135deg, #6162e6, #4b4bc9);
    box-shadow: 0 10px 24px rgba(91, 92, 226, 0.24);
    color: #fff;
    text-align: left;
  }

  .generate-icon {
    display: grid;
    place-items: center;
    width: 38px;
    height: 38px;
    border-radius: 10px;
    background: rgba(255, 255, 255, 0.14);
  }

  .generate-text {
    display: flex;
    flex: 1;
    flex-direction: column;
  }

  .generate b {
    font-size: 13px;
    line-height: 20px;
  }

  .generate small {
    color: #d4d4f7;
    font-size: 10px;
    line-height: 18px;
  }
</style>
